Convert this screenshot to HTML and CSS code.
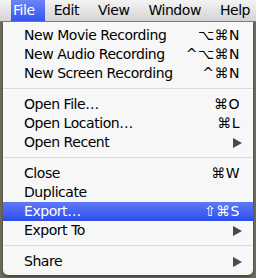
FILE: index.html
```html
<!DOCTYPE html>
<html lang="en">
<head>
    <meta charset="UTF-8">
    <title>File menu</title>
    <link rel="stylesheet" href="styles.css">
</head>
<body>
    <div class="menubar">
        <span class="title active">File</span>
        <span class="title">Edit</span>
        <span class="title">View</span>
        <span class="title">Window</span>
        <span class="title">Help</span>
    </div>

    <div class="menu">
        <div class="item"><span>New Movie Recording</span><span class="key">⌥⌘N</span></div>
        <div class="item"><span>New Audio Recording</span><span class="key">^⌥⌘N</span></div>
        <div class="item"><span>New Screen Recording</span><span class="key">^⌘N</span></div>
        <div class="sep"></div>
        <div class="item"><span>Open File…</span><span class="key">⌘O</span></div>
        <div class="item"><span>Open Location…</span><span class="key">⌘L</span></div>
        <div class="item"><span>Open Recent</span><span class="arrow"></span></div>
        <div class="sep"></div>
        <div class="item"><span>Close</span><span class="key">⌘W</span></div>
        <div class="item"><span>Duplicate</span></div>
        <div class="item selected"><span>Export…</span><span class="key">⇧⌘S</span></div>
        <div class="item"><span>Export To</span><span class="arrow"></span></div>
        <div class="sep"></div>
        <div class="item"><span>Share</span><span class="arrow"></span></div>
    </div>
</body>
</html>
```

FILE: styles.css
```css
/* page */
body {
    margin: 0;
    width: 256px;
    height: 278px;
    background: #6e6c5e;
    font-family: 'DejaVu Sans', 'Liberation Sans', sans-serif;
    font-size: 14px;
    letter-spacing: -0.45px;
    color: #000;
    overflow: hidden;
}

/* menu bar */
.menubar {
    height: 22px;
    display: flex;
    align-items: center;
    padding-left: 11px;
    background: linear-gradient(#f3f3f3, #d4d4d4);
    border-bottom: 1px solid #7c7c7c;
    box-sizing: border-box;
    white-space: nowrap;
}

.title {
    height: 21px;
    line-height: 21px;
    padding: 0 10px 0 9px;
}

.title.active {
    padding-left: 2px;
    color: #fff;
    background: linear-gradient(#6c84f8, #3355ee);
}

/* the dropdown */
.menu {
    margin: 0 3px;
    padding: 4px 0 4px;
    background: #f7f7f7;
    border-radius: 0 0 5px 5px;
    box-shadow: 0 2px 3px rgba(0, 0, 0, 0.4);
}

.item {
    height: 19px;
    line-height: 19px;
    display: flex;
    justify-content: space-between;
    align-items: center;
    padding: 0 13px 0 21px;
}

.item.selected {
    color: #fff;
    background: linear-gradient(#5f79f6, #2d4eec);
}

.key {
    letter-spacing: 0.5px;
}

.arrow {
    width: 0;
    height: 0;
    margin-right: -2px;
    border-left: 9px solid #4a4a4a;
    border-top: 5px solid transparent;
    border-bottom: 5px solid transparent;
}

.sep {
    height: 1px;
    margin: 5px 0 6px;
    background: #dadada;
}
```
